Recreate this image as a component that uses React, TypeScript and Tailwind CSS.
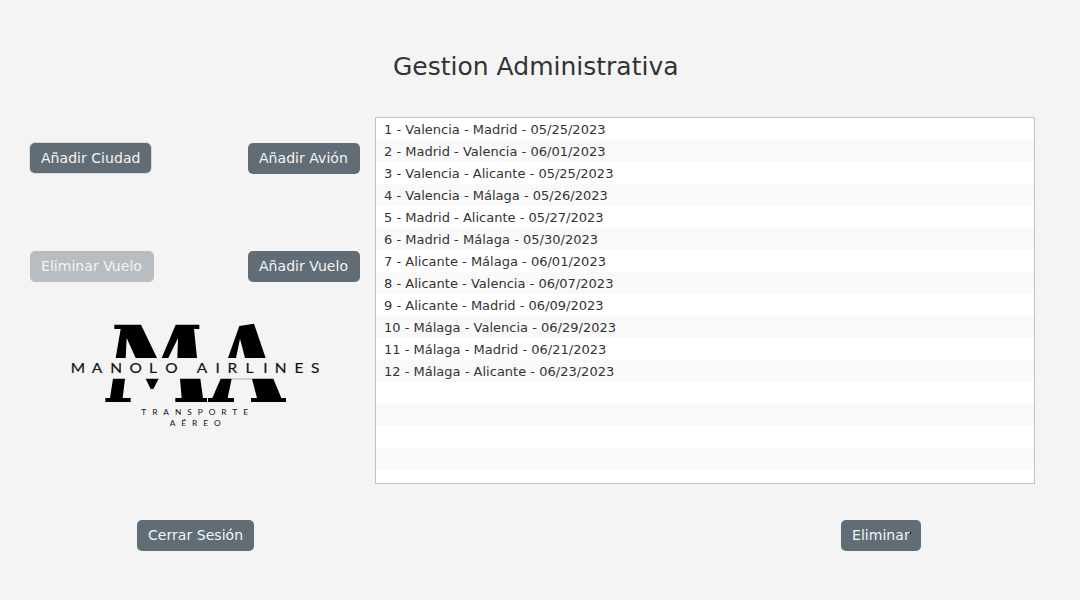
import type { ReactNode } from "react";

const flights = [
  "1 - Valencia - Madrid - 05/25/2023",
  "2 - Madrid - Valencia - 06/01/2023",
  "3 - Valencia - Alicante - 05/25/2023",
  "4 - Valencia - Málaga - 05/26/2023",
  "5 - Madrid - Alicante - 05/27/2023",
  "6 - Madrid - Málaga - 05/30/2023",
  "7 - Alicante - Málaga - 06/01/2023",
  "8 - Alicante - Valencia - 06/07/2023",
  "9 - Alicante - Madrid - 06/09/2023",
  "10 - Málaga - Valencia - 06/29/2023",
  "11 - Málaga - Madrid - 06/21/2023",
  "12 - Málaga - Alicante - 06/23/2023",
  "",
  "",
  "",
  "",
  "",
];

function Button({ children, className = "h-[31px]", disabled = false }: { children: ReactNode; className?: string; disabled?: boolean }) {
  return (
    <button
      disabled={disabled}
      className={`shrink-0 rounded-[5px] bg-[#606c76] pl-[11px] text-left text-[14px] leading-[31px] tracking-[0.04px] whitespace-nowrap text-[#f4f4f4] disabled:opacity-40 ${className}`}
    >
      {children}
    </button>
  );
}

function Logo() {
  return (
    <svg viewBox="0 0 810 390" className="block h-[130px] w-[270px]" role="img" aria-label="Manolo Airlines">
      <g fill="#000">
        <path d="M163 44H243L291 144H227L200 84L197 144H167L182 57H163Z" />
        <path d="M305 144L347 44H418V57H402L411 144H352L354 84L325 144Z" />
        <path d="M159 206H195L188 264H212V276H136V264H150Z" />
        <path d="M257 206H296L280 237H272Z" />
        <path d="M360 206H421L429 264H441V276H346V264H365Z" />
        <path d="M504 144L538 48L582 41L617 144H555L540 86L528 144Z" />
        <path d="M482 206H515L503 264H522V276H444V264H457Z" />
        <path d="M576 206H640L664 264H678V276H573V264H591Z" />
        <path d="M515 206H577V208H515Z" fill="#888" />
      </g>
      <g fill="#111" fontFamily="Lato, sans-serif">
        <g transform="scale(1.16 1)" fontSize="40" stroke="#111" strokeWidth="0.5">
          <text y="188" x="28 82 130 180 230.5 272">MANOLO</text>
          <text y="188" x="354 402 433 479.5 525.5 555.5 606.5 649">AIRLINES</text>
        </g>
        <g fontSize="25">
          <text x="244" y="315" textLength="320" lengthAdjust="spacing">TRANSPORTE</text>
          <text x="329" y="348" textLength="153" lengthAdjust="spacing">AÉREO</text>
        </g>
      </g>
    </svg>
  );
}

export default function App() {
  return (
    <main className="flex h-[600px] w-[1080px] flex-col overflow-hidden bg-[#f4f4f4] font-['DejaVu_Sans',sans-serif] text-[#333]">
      <h1 className="mt-[52px] ml-[393px] h-[30px] text-[25px] leading-[30px] whitespace-nowrap">Gestion Administrativa</h1>
      <div className="mt-[35px] flex h-[367px]">
        <section className="flex w-[375px] flex-col pt-[26px]">
          <div className="flex h-[31px] justify-between pr-[15px] pl-[30px]">
            <Button className="h-[30px] w-[121px] shadow-[0_0_0_1px_#d5d8dc]">Añadir Ciudad</Button>
            <Button className="h-[31px] w-[112px]">Añadir Avión</Button>
          </div>
          <div className="mt-[77px] flex h-[31px] justify-between pr-[15px] pl-[30px]">
            <Button disabled className="h-[31px] w-[124px]">Eliminar Vuelo</Button>
            <Button className="h-[31px] w-[112px]">Añadir Vuelo</Button>
          </div>
          <div className="mt-7 ml-[60px]">
            <Logo />
          </div>
        </section>
        <ul className="w-[660px] overflow-hidden border border-[#c3c3c3] bg-white">
          {flights.map((flight, i) => (
            <li key={i} className="h-[22px] pl-2 text-[13px] leading-[24px] tracking-[0.01px] whitespace-nowrap even:bg-[#f9f9f9]">
              {flight}
            </li>
          ))}
        </ul>
      </div>
      <footer className="mt-9 flex justify-between pr-[159px] pl-[137px]">
        <Button className="h-[31px] w-[117px]">Cerrar Sesión</Button>
        <Button className="relative h-[31px] w-20">
          Eliminar
          <span className="absolute top-[12px] left-[69px] h-[2px] w-px bg-black" />
        </Button>
      </footer>
    </main>
  );
}
